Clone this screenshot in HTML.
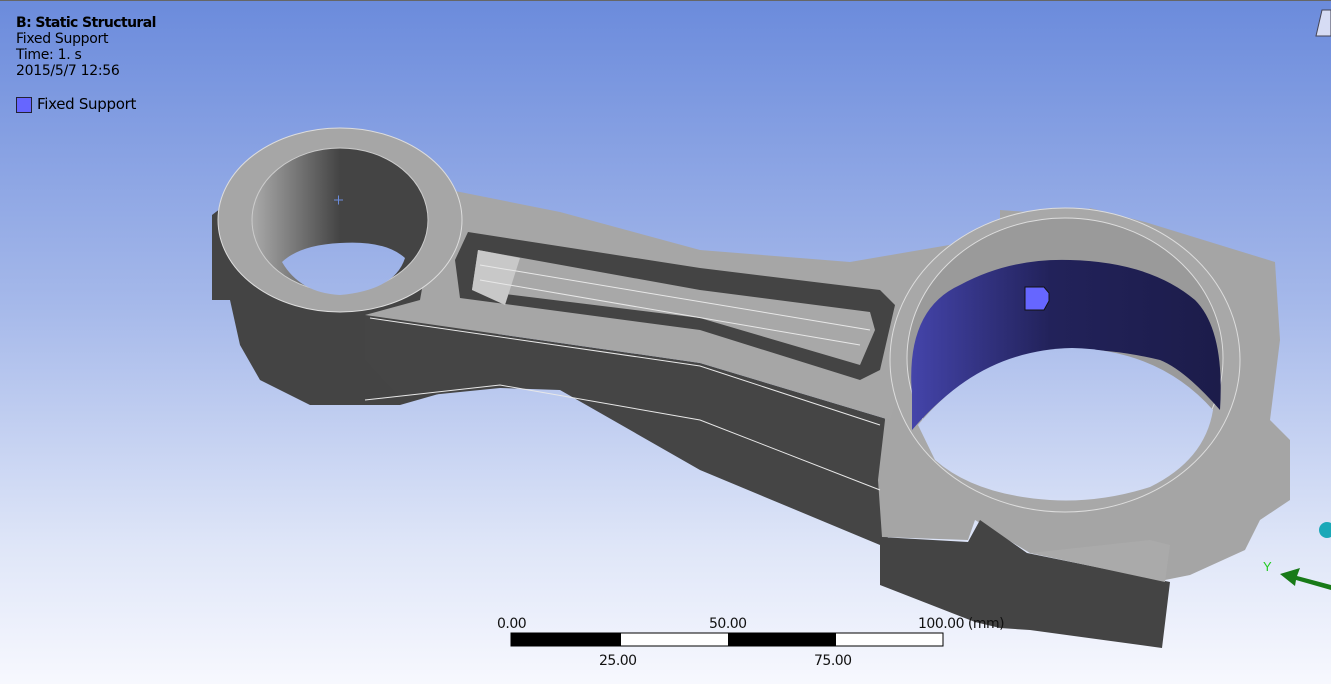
<!DOCTYPE html>
<html><head><meta charset="utf-8"><style>
html,body{margin:0;padding:0;width:1331px;height:684px;overflow:hidden}
body{position:relative;font-family:"DejaVu Sans","Liberation Sans",sans-serif}
.t{position:absolute;left:16px;font-size:14px;color:#000;line-height:16px;letter-spacing:-0.3px}
</style></head><body>
<svg width="1331" height="684" style="position:absolute;left:0;top:0">
<defs>
<linearGradient id="bg" gradientUnits="userSpaceOnUse" x1="0" y1="0" x2="0" y2="684">
<stop offset="0" stop-color="#6b8bdc"/><stop offset="0.45" stop-color="#a6b9ea"/><stop offset="0.8" stop-color="#dfe6f8"/><stop offset="1" stop-color="#f7f8fe"/></linearGradient>
<linearGradient id="bore1" x1="0" y1="0" x2="1" y2="0"><stop offset="0" stop-color="#aaa"/><stop offset="0.5" stop-color="#444"/><stop offset="1" stop-color="#444"/></linearGradient>
<linearGradient id="blue" x1="0" y1="0" x2="1" y2="0"><stop offset="0" stop-color="#4444aa"/><stop offset="0.45" stop-color="#22225a"/><stop offset="1" stop-color="#1c1c4a"/></linearGradient>
</defs>
<rect width="1331" height="684" fill="url(#bg)"/>
<rect width="1331" height="1" fill="#666"/>
<!-- small end side -->
<path d="M212,215 L225,205 L240,180 L460,230 L500,330 L470,385 L400,405 L310,405 L260,380 L240,345 L230,300 L212,300Z" fill="#444"/>
<!-- beam dark side -->
<path d="M365,315 L700,363 L890,420 L905,520 L880,545 L700,470 L560,390 L500,388 L400,398 L365,360Z" fill="#454545"/>
<!-- big end body -->
<path d="M1000,210 L1085,216 L1090,208 L1145,222 L1275,262 L1280,340 L1270,420 L1290,440 L1290,500 L1260,520 L1245,550 L1190,575 L1165,580 L1030,553 L975,520 L968,540 L882,537 L878,480 L885,420 L880,370 L890,310 L920,270 L1000,235Z" fill="#a5a5a5"/>
<!-- cap dark -->
<path d="M880,537 L968,542 L980,520 L1027,553 L1170,582 L1162,648 L1030,630 L1000,628 L975,622 L880,585Z" fill="#444"/>
<path d="M1030,553 L1150,540 L1170,545 L1165,582Z" fill="#aaa"/>
<!-- beam top face -->
<path d="M440,188 L560,212 L700,250 L850,262 L990,238 L930,280 L910,360 L890,420 L700,363 L365,315 L420,300Z" fill="#a6a6a6"/>
<!-- channel -->
<path d="M468,232 L700,268 L880,290 L895,305 L880,370 L860,380 L700,330 L460,298 L455,260Z" fill="#444"/>
<path d="M478,250 L700,290 L870,312 L875,330 L860,365 L700,318 L472,290Z" fill="#a8a8a8"/>
<path d="M478,250 L520,258 L505,305 L472,290Z" fill="#c8c8c8"/>
<g stroke="#e8e8e8" stroke-width="1" fill="none">
<path d="M480,265 L870,330 M480,280 L860,345 M370,318 L700,366 L880,425"/>
<path d="M365,400 L500,385 L700,420 L880,490"/>
</g>
<!-- small end top -->
<ellipse cx="340" cy="220" rx="122" ry="92" fill="#a6a6a6" stroke="#ddd"/>
<ellipse cx="340" cy="220" rx="88" ry="72" fill="url(#bore1)" stroke="#ccc"/>
<path d="M282,262 Q300,245 340,243 Q385,240 405,258 Q395,290 340,295 Q300,293 282,262Z" fill="url(#bg)"/>
<path d="M334,200 h9 M338.5,195.5 v9" stroke="#6b8cdc" stroke-width="1"/>
<!-- big end ring -->
<ellipse cx="1065" cy="360" rx="175" ry="152" fill="#a8a8a8" stroke="#ddd"/>
<ellipse cx="1065" cy="358" rx="158" ry="140" fill="#9a9a9a" stroke="#ddd"/>
<path d="M912,395 Q905,310 960,285 Q1010,258 1070,260 Q1150,262 1195,300 Q1225,330 1220,410 Q1185,370 1160,360 Q1110,348 1070,350 Q980,350 912,430Z" fill="url(#blue)"/>
<path d="M918,425 Q980,350 1072,348 Q1160,350 1213,410 Q1205,460 1150,487 Q1100,503 1050,500 Q975,495 935,460Z" fill="url(#bg)"/>
<path d="M1025,287 h19 l5,6 v8 l-5,9 h-19z" fill="#6666ff" stroke="#111"/>
<!-- axes -->
<circle cx="1327" cy="530" r="8" fill="#1aa8b8"/>
<path d="M1280,574 L1300,568 L1297,576 L1331,585 L1331,590 L1296,580 L1295,586Z" fill="#187a18"/>
<text x="1263" y="571" font-size="13" fill="#2c2" font-family="Liberation Sans">Y</text>
<path d="M1322,10 L1331,10 L1331,36 L1316,36Z" fill="#d6dcf4" stroke="#445" stroke-width="1"/>
<!-- scale bar -->
<rect x="511" y="633" width="432" height="13" fill="#fff" stroke="#000"/>
<rect x="511" y="633" width="110" height="13" fill="#000"/>
<rect x="728" y="633" width="108" height="13" fill="#000"/>
<g font-size="14" font-family="DejaVu Sans" fill="#111" letter-spacing="-0.5">
<text x="497" y="628">0.00</text><text x="709" y="628">50.00</text><text x="918" y="628">100.00 (mm)</text>
<text x="599" y="665">25.00</text><text x="814" y="665">75.00</text></g>
</svg>
<div class="t" style="top:15px;font-weight:bold;letter-spacing:-0.6px">B: Static Structural</div>
<div class="t" style="top:31px">Fixed Support</div>
<div class="t" style="top:47px">Time: 1. s</div>
<div class="t" style="top:63px">2015/5/7 12:56</div>
<div style="position:absolute;left:16px;top:97px;width:14px;height:14px;background:#6666ff;border:1px solid #223"></div>
<div class="t" style="top:96px;left:37px;font-size:15px">Fixed Support</div>
</body></html>
